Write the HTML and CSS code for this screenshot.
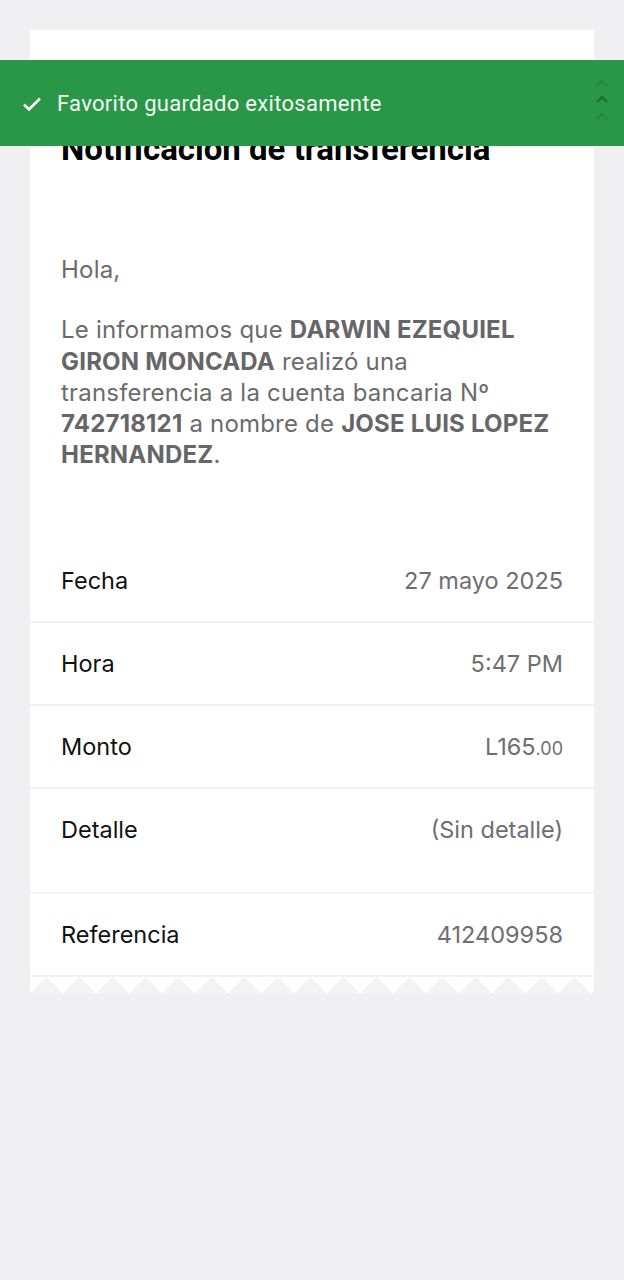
FILE: index.html
```html
<!DOCTYPE html>
<html lang="es">
<head>
<meta charset="utf-8">
<title>Notificación de transferencia</title>
<link rel="stylesheet" href="styles.css">
</head>
<body>
<div class="page">
  <div class="card">
    <div class="head">
      <h1 class="title">Notificación de transferencia</h1>
    </div>
    <div class="message">
      <p class="greet">Hola,</p>
      <p class="body">Le informamos que <b>DARWIN EZEQUIEL GIRON MONCADA</b> realizó una transferencia a la cuenta bancaria Nº <b>742718121</b> a nombre de <b>JOSE LUIS LOPEZ HERNANDEZ</b>.</p>
    </div>
    <div class="rows">
      <div class="row"><span class="label">Fecha</span><span class="value">27 mayo 2025</span></div>
      <div class="row"><span class="label">Hora</span><span class="value">5:47 PM</span></div>
      <div class="row"><span class="label">Monto</span><span class="value">L165<small class="cents">.00</small></span></div>
      <div class="row row-tall"><span class="label">Detalle</span><span class="value">(Sin detalle)</span></div>
      <div class="row"><span class="label">Referencia</span><span class="value">412409958</span></div>
    </div>
    <div class="zigzag"></div>
  </div>
</div>
<div class="toast">
  <svg class="check" width="20" height="16" viewBox="0 0 20 16"><path d="M2 8.5 L7 13.5 L18 2.5" fill="none" stroke="#ffffff" stroke-width="2.6"/></svg>
  <span class="toast-text">Favorito guardado exitosamente</span>
  <svg class="chevrons" width="14" height="50" viewBox="0 0 14 50"><path d="M2 8 L7 3 L12 8" fill="none" stroke="#1d6b31" stroke-width="1.6" opacity="0.45"/><path d="M2 24 L7 19 L12 24" fill="none" stroke="#1d6b31" stroke-width="2"/><path d="M2 41 L7 36 L12 41" fill="none" stroke="#1d6b31" stroke-width="1.6" opacity="0.45"/></svg>
</div>
</body>
</html>
```
FILE: styles.css
```css
html, body {
  margin: 0;
  padding: 0;
  background: #f0f0f2;
}
body {
  width: 624px;
  min-height: 1280px;
  font-family: Inter, "Noto Sans", sans-serif;
}
.page {
  padding: 30px 30px 0 30px;
}
.card {
  background: #ffffff;
  display: flex;
  flex-direction: column;
}
.head {
  padding: 99px 31px 0 31px;
}
.title {
  margin: 0;
  font-family: Roboto, "Liberation Sans", sans-serif;
  font-weight: 700;
  font-size: 33px;
  line-height: 40px;
  color: #000000;
}
.message {
  padding: 85px 31px 0 31px;
  color: #6b6b6d;
  font-size: 24px;
  line-height: 31.3px;
  letter-spacing: 0.2px;
}
.message p {
  margin: 0;
}
.greet {
  margin-bottom: 29px !important;
}
.message b {
  font-weight: 700;
  color: #666668;
}
.rows {
  margin-top: 69px;
  display: flex;
  flex-direction: column;
}
.row {
  display: flex;
  justify-content: space-between;
  align-items: center;
  padding: 25px 31px 25px 31px;
  line-height: 31px;
  height: 31px;
  font-size: 23.5px;
  border-bottom: 2px solid #f1f1f3;
}
.row-tall {
  padding-bottom: 47px;
  align-items: flex-start;
}
.label {
  color: #111111;
}
.value {
  color: #6e6e70;
}
.cents {
  font-size: 18px;
  line-height: 0;
}
.zigzag {
  height: 17px;
  background-color: #f3f3f4;
  background-image:
    linear-gradient(135deg, #ffffff 25%, transparent 25%),
    linear-gradient(225deg, #ffffff 25%, transparent 25%);
  background-size: 33px 33px;
  background-position: 0 0;
  background-repeat: repeat-x;
}
.toast {
  position: absolute;
  top: 60px;
  left: 0;
  width: 624px;
  height: 86px;
  background: #2a9647;
  display: flex;
  align-items: center;
  box-sizing: border-box;
  padding-left: 22px;
}
.check {
  margin-right: 15px;
  margin-top: 1px;
}
.toast-text {
  font-family: Roboto, "Liberation Sans", sans-serif;
  font-size: 22px;
  color: #f3faf4;
  letter-spacing: 0.3px;
}
.chevrons {
  position: absolute;
  right: 15px;
  top: 18px;
}
```
